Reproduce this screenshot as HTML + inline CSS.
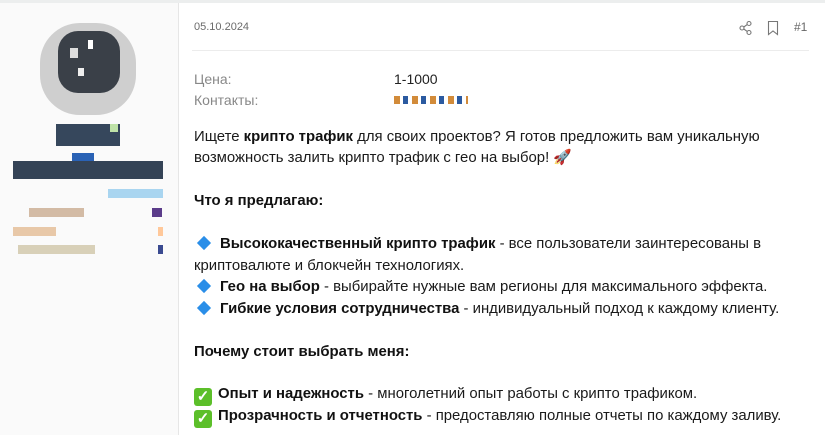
<!DOCTYPE html><html><head><meta charset="utf-8"><style>
body{margin:0;width:825px;height:435px;overflow:hidden;background:#fff;font-family:"Liberation Sans",sans-serif;position:relative}
.top{position:absolute;left:0;top:0;width:825px;height:3px;background:#eceeee}
.side{position:absolute;left:0;top:3px;width:178px;height:432px;background:#fafafa;border-right:1px solid #e6e6e6}
.p{position:absolute}
.date{position:absolute;left:194px;top:21px;font-size:11px;color:#6b6b6b}
.hr{position:absolute;left:192px;top:50px;width:617px;height:1px;background:#ececec}
.lab{position:absolute;left:194px;font-size:14px;color:#888}
.main{position:absolute;left:194px;top:126px;width:625px;font-size:14.9px;line-height:21.45px;color:#1a1a1a}
.main p{margin:0;white-space:nowrap}
.main b{color:#111}
.dia{display:inline-block;width:10px;height:10px;background:#2a8ee8;transform:rotate(45deg);margin:0 11px 0 5px;vertical-align:0px}
.chk{display:inline-block;width:18px;height:18px;background:#5cbf2a;border-radius:3px;vertical-align:-3px;margin-right:6px;color:#fff;font-size:15px;line-height:18px;text-align:center;font-weight:bold}
</style></head><body>
<div class="top"></div>
<div class="side">
<div class="p" style="left:40px;top:20px;width:96px;height:92px;background:#cfcfcf;border-radius:40px"></div>
<div class="p" style="left:58px;top:28px;width:62px;height:62px;background:#3a4048;border-radius:20px"></div>
<div class="p" style="left:70px;top:45px;width:8px;height:10px;background:#ddd"></div>
<div class="p" style="left:78px;top:65px;width:6px;height:8px;background:#eee"></div>
<div class="p" style="left:88px;top:37px;width:5px;height:9px;background:#fff"></div>
<div class="p" style="left:56px;top:121px;width:64px;height:22px;background:#36475c"></div>
<div class="p" style="left:110px;top:121px;width:8px;height:8px;background:#bfe3a8"></div>
<div class="p" style="left:72px;top:150px;width:22px;height:8px;background:#2a62b5"></div>
<div class="p" style="left:13px;top:158px;width:150px;height:18px;background:#344356"></div>
<div class="p" style="left:108px;top:186px;width:55px;height:9px;background:#a9d5f0"></div>
<div class="p" style="left:29px;top:205px;width:55px;height:9px;background:#d3bba5"></div>
<div class="p" style="left:152px;top:205px;width:10px;height:9px;background:#5b3c8a"></div>
<div class="p" style="left:13px;top:224px;width:43px;height:9px;background:#e8c8a8"></div>
<div class="p" style="left:158px;top:224px;width:5px;height:9px;background:#ffc89a"></div>
<div class="p" style="left:18px;top:242px;width:77px;height:9px;background:#d8d0b8"></div>
<div class="p" style="left:158px;top:242px;width:5px;height:9px;background:#3a4a90"></div>
</div>
<div class="date">05.10.2024</div>
<svg class="p" style="left:738px;top:20px" width="16" height="16" viewBox="0 0 16 16" fill="none" stroke="#777" stroke-width="1.1"><circle cx="11" cy="3.5" r="2"/><circle cx="4" cy="8" r="2"/><circle cx="11" cy="12.5" r="2"/><path d="M5.8 7 9.2 4.6M5.8 9 9.2 11.4"/></svg>
<svg class="p" style="left:766px;top:20px" width="14" height="16" viewBox="0 0 14 16" fill="none" stroke="#777" stroke-width="1.1"><path d="M2.5 1.5h9v13L7 11l-4.5 3.5z"/></svg>
<div class="p" style="left:794px;top:20px;font-size:12px;color:#666">#1</div>
<div class="hr"></div>
<div class="lab" style="top:71px">Цена:</div>
<div class="lab" style="top:92px">Контакты:</div>
<div class="p" style="left:394px;top:71px;font-size:14px;color:#222">1-1000</div>
<div class="p" style="left:394px;top:96px;width:74px;height:8px;background:repeating-linear-gradient(90deg,#d28b3a 0 6px,#fff 6px 9px,#2b5aa0 9px 14px,#fff 14px 18px)"></div>
<div class="main" style="top:127px">
<p>Ищете <b>крипто трафик</b> для своих проектов? Я готов предложить вам уникальную</p>
<p>возможность залить крипто трафик с гео на выбор! 🚀</p>
<p>&nbsp;</p>
<p><b>Что я предлагаю:</b></p>
<p>&nbsp;</p>
<p><span class="dia"></span><b>Высококачественный крипто трафик</b> - все пользователи заинтересованы в</p>
<p>криптовалюте и блокчейн технологиях.</p>
<p><span class="dia"></span><b>Гео на выбор</b> - выбирайте нужные вам регионы для максимального эффекта.</p>
<p><span class="dia"></span><b>Гибкие условия сотрудничества</b> - индивидуальный подход к каждому клиенту.</p>
<p>&nbsp;</p>
<p><b>Почему стоит выбрать меня:</b></p>
<p>&nbsp;</p>
<p><span class="chk">✓</span><b>Опыт и надежность</b> - многолетний опыт работы с крипто трафиком.</p>
<p><span class="chk">✓</span><b>Прозрачность и отчетность</b> - предоставляю полные отчеты по каждому заливу.</p>
</div>
</body></html>
